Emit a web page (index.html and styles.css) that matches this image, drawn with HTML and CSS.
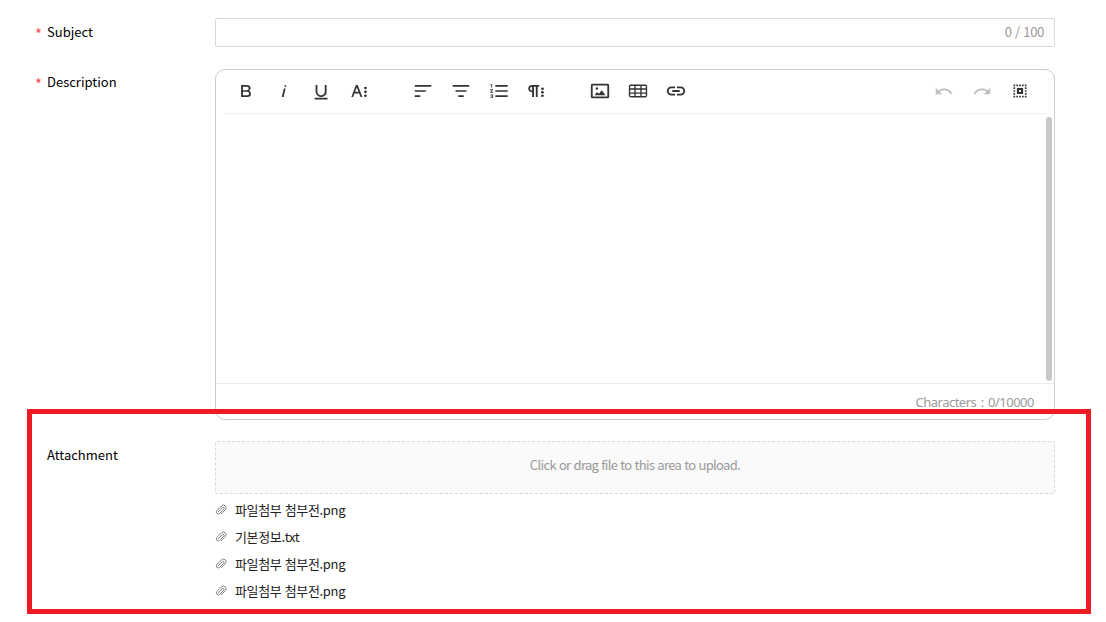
FILE: index.html
```html
<!DOCTYPE html>
<html lang="ko">
<head>
<meta charset="utf-8">
<title>Support request</title>
<link rel="stylesheet" href="styles.css">
</head>
<body>
<form class="form">
  <div class="row row-subject">
    <div class="label"><span class="star">*</span>Subject</div>
    <div class="input"><span>0 / 100</span></div>
  </div>
  <div class="row row-description">
    <div class="label"><span class="star">*</span>Description</div>
    <div class="editor">
      <div class="toolbar">
        <div class="group group-text">
          <span class="btn"><svg viewBox="0 0 24 24"><path d="M15.25,11.8A3.68,3.68,0,0,0,17,9a3.93,3.93,0,0,0-3.86-4H6.65V19h7a3.74,3.74,0,0,0,3.7-3.78V15.1A3.64,3.64,0,0,0,15.25,11.8ZM8.65,7h4.2a2.09,2.09,0,0,1,2,1.3,2.09,2.09,0,0,1-1.37,2.61,2.23,2.23,0,0,1-.63.09H8.65Zm4.6,10H8.65V13h4.6a2.09,2.09,0,0,1,2,1.3,2.09,2.09,0,0,1-1.37,2.61A2.23,2.23,0,0,1,13.25,17Z"/></svg></span>
          <span class="btn"><svg viewBox="0 0 24 24"><path d="M11.76,9h2l-2.2,10h-2Zm1.68-4a1,1,0,1,0,1,1,1,1,0,0,0-1-1Z"/></svg></span>
          <span class="btn"><svg viewBox="1 0 24 24"><path d="M19,20v2H5V20Zm-3-6.785a4,4,0,0,1-5.74,3.4A3.75,3.75,0,0,1,8,13.085V5H6v8.21a6,6,0,0,0,8,5.44,5.851,5.851,0,0,0,4-5.65V5H16Z"/></svg></span>
          <span class="btn"><svg viewBox="1 0 24 24"><path d="M13.55,19h2l-5-14h-2l-5,14h2l1.4-4h5.1Zm-5.9-6,1.9-5.2,1.9,5.2Z"/><circle cx="18.95" cy="8.5" r="1.5"/><circle cx="18.95" cy="13" r="1.5"/><circle cx="18.95" cy="17.5" r="1.5"/></svg></span>
        </div>
        <div class="group group-text">
          <span class="btn"><svg viewBox="0 0 24 24"><path d="M3,5h18v2H3ZM3,11h12v2H3ZM3,17h6v2H3Z"/></svg></span>
          <span class="btn"><svg viewBox="0 0 24 24"><path d="M3,5h18v2H3ZM6,11h12v2H6ZM9,17h6v2H9Z"/></svg></span>
          <span class="btn"><svg viewBox="0 0 24 24"><path d="M2.5,16h3v4h-3v-1h2v-.5h-1v-1h1V17h-2Zm1-12h-1V5h1v3h1V4ZM2.5,11h1.8L2.5,13.1V14h3V13H3.7L5.5,10.9V10h-3ZM8,5V7H21.500V5ZM8,19H21.500V17H8ZM8,13H21.500V11H8Z"/></svg></span>
          <span class="btn"><svg viewBox="1 0 24 24"><path d="M7.7,5A4.200,4.200,0,0,0,7.7,13.400V19h2V7h2V19h2V7h1.700V5ZM7.7,7V11.500A2.250,2.250,0,0,1,7.7,7Z"/><circle cx="18.95" cy="9.500" r="1.500"/><circle cx="18.95" cy="13.500" r="1.500"/><circle cx="18.95" cy="17.500" r="1.500"/></svg></span>
        </div>
        <div class="group">
          <span class="btn"><svg viewBox="0 0 24 24"><rect x="3" y="5" width="18" height="14" rx=".7" fill="none" stroke="currentColor" stroke-width="2"/><path d="M6.200,16.500l2.400-3.300 2.300,1.800 3-3.800L18,16.500Z"/><circle cx="8.600" cy="9.200" r="1.300"/></svg></span>
          <span class="btn"><svg viewBox="0 0 24 24"><path fill-rule="evenodd" d="M20,5H4A2,2,0,0,0,2,7V17a2,2,0,0,0,2,2H20a2,2,0,0,0,2-2V7A2,2,0,0,0,20,5ZM9.500,6.500h5V9h-5ZM9.500,10.500h5v3h-5ZM8,17.500H4a.5.5,0,0,1-.5-.5V15H8ZM8,13.500H3.500v-3H8ZM8,9H3.500V7A.5.5,0,0,1,4,6.500H8ZM14.500,17.500h-5V15h5ZM20.500,17a.5.5,0,0,1-.5.5H16V15h4.500ZM20.500,13.500H16v-3h4.500ZM20.500,9H16V6.500h4a.5.5,0,0,1,.5.500Z"/></svg></span>
          <span class="btn"><svg viewBox="0 0 24 24"><path fill="none" stroke="currentColor" stroke-width="2" d="M11,8H7a4,4,0,0,0,0,8h4M13,8h4a4,4,0,0,1,0,8h-4M8,12h8"/></svg></span>
        </div>
        <div class="group group-right">
          <span class="btn off"><svg viewBox="0 0 24 24"><path d="M10.400,9.400c-1.700.3-3.200.9-4.600,2L3,8.500v7h7l-2.700-2.700c3.700-2.600,8.800-1.800,11.500,1.900.2.3.4.5.5.8l1.800-.9C18.900,10.500,14.600,8.600,10.400,9.400Z"/></svg></span>
          <span class="btn off"><svg viewBox="0 0 24 24"><path d="M13.600,9.400c1.700.3,3.200.9,4.600,2L21,8.500v7H14l2.700-2.700C13,10.200,7.900,11,5.200,14.700c-.2.3-.4.5-.5.8l-1.800-.9C5.100,10.500,9.400,8.600,13.600,9.400Z"/></svg></span>
          <span class="btn"><svg viewBox="0 0 24 24"><path fill="none" stroke="currentColor" stroke-width="1.800" stroke-dasharray="1.800 1.300" d="M4.900,5.800H19.100M4.900,18.200H19.100M5.800,8V16M18.200,8V16"/><path fill-rule="evenodd" d="M8.600,8.600h6.800v6.800H8.600ZM11,11v2h2v-2Z"/></svg></span>
        </div>
      </div>
      <div class="canvas"><div class="scrollbar"></div></div>
      <div class="counter">Characters : 0/10000</div>
    </div>
  </div>
  <div class="row row-attachment">
    <div class="label">Attachment</div>
    <div class="attach">
      <div class="dropzone">Click or drag file to this area to upload.</div>
      <ul class="files">
        <li><svg class="clip" viewBox="0 0 12 12"><path d="M3.100,7.900 7.300,3.700a1,1,0,0,1,1.500,1.500L4.700,9.300a1.900,1.900,0,0,1-2.800-2.800L6.500,1.900a2.600,2.600,0,0,1,3.800,3.800L6.100,9.900"/></svg>파일첨부 첨부전.png</li>
        <li><svg class="clip" viewBox="0 0 12 12"><path d="M3.100,7.900 7.300,3.700a1,1,0,0,1,1.500,1.500L4.700,9.300a1.900,1.900,0,0,1-2.800-2.800L6.500,1.900a2.600,2.600,0,0,1,3.800,3.800L6.100,9.900"/></svg>기본정보.txt</li>
        <li><svg class="clip" viewBox="0 0 12 12"><path d="M3.100,7.900 7.300,3.700a1,1,0,0,1,1.500,1.500L4.700,9.300a1.900,1.900,0,0,1-2.800-2.800L6.500,1.900a2.600,2.600,0,0,1,3.800,3.800L6.100,9.900"/></svg>파일첨부 첨부전.png</li>
        <li><svg class="clip" viewBox="0 0 12 12"><path d="M3.100,7.900 7.300,3.700a1,1,0,0,1,1.500,1.500L4.700,9.300a1.900,1.900,0,0,1-2.800-2.800L6.500,1.900a2.600,2.600,0,0,1,3.800,3.800L6.100,9.900"/></svg>파일첨부 첨부전.png</li>
      </ul>
    </div>
  </div>
</form>
<div class="highlight"></div>
</body>
</html>
```

FILE: styles.css
```css
* { box-sizing: border-box; }
body {
  margin: 0;
  height: 622px;
  overflow: hidden;
  background: #fff;
  color: #000;
  font: 13px/20px "Noto Sans CJK KR", "Noto Sans", sans-serif;
}
.form { padding: 18px 51px 0 35px; }
.row { display: grid; grid-template-columns: 180px 840px; }
.row-description { margin-top: 22px; }
.row-attachment { margin-top: 21px; }
.label { display: flex; padding: 4px 0 0 12px; }
.row-description .label { padding-top: 3px; }
.star { width: 12px; height: 20px; margin-left: -12px; padding-top: 2px; color: #ff4d4f; font-size: 15px; }
.input {
  display: flex;
  align-items: center;
  justify-content: flex-end;
  height: 29px;
  padding: 0 10px 2px;
  border: 1px solid #d9d9d9;
  border-radius: 2px;
  color: #999;
  letter-spacing: -.3px;
}
.editor {
  display: flex;
  flex-direction: column;
  height: 351px;
  border: 1px solid #ccc;
  border-radius: 10px;
}
.toolbar {
  display: flex;
  gap: 25px;
  height: 44px;
  margin: 0 8px;
  padding: 2px 7px 0 3px;
  border-bottom: 1px solid #efefef;
}
.group { display: flex; height: 38px; }
.group-right { margin-left: auto; }
.btn {
  display: flex;
  align-items: center;
  justify-content: center;
  width: 38px;
  color: #333;
}
.btn svg { width: 22px; height: 22px; fill: currentColor; }
.group-text svg { transform: scaleY(.93); }
.off { color: #bdbdbd; }
.canvas { display: flex; justify-content: flex-end; flex: 1; padding: 3px 2px 2px; }
.scrollbar { width: 6px; border-radius: 3px; background: #c8c8c8; }
.counter {
  height: 36px;
  padding: 8px 20px 0;
  border-top: 1px solid #ebebeb;
  color: #999;
  font-family: "Noto Sans", sans-serif;
  letter-spacing: -.5px;
  word-spacing: 1.500px;
  text-align: right;
}
.dropzone {
  height: 53px;
  padding-top: 13px;
  border: 1px dashed #d9d9d9;
  border-radius: 2px;
  background: #fafafa;
  color: #999;
  letter-spacing: -.66px;
  text-align: center;
}
.files { margin: 2px 0 0; padding: 0; list-style: none; color: #222; letter-spacing: -.35px; }
.files li { display: flex; align-items: center; height: 27px; gap: 8px; }
.clip { width: 12px; height: 12px; fill: none; stroke: #777; stroke-width: .9; }
.highlight {
  position: absolute;
  left: 27px;
  top: 409px;
  width: 1064px;
  height: 205px;
  border: 5px solid #ed1c24;
}
```
